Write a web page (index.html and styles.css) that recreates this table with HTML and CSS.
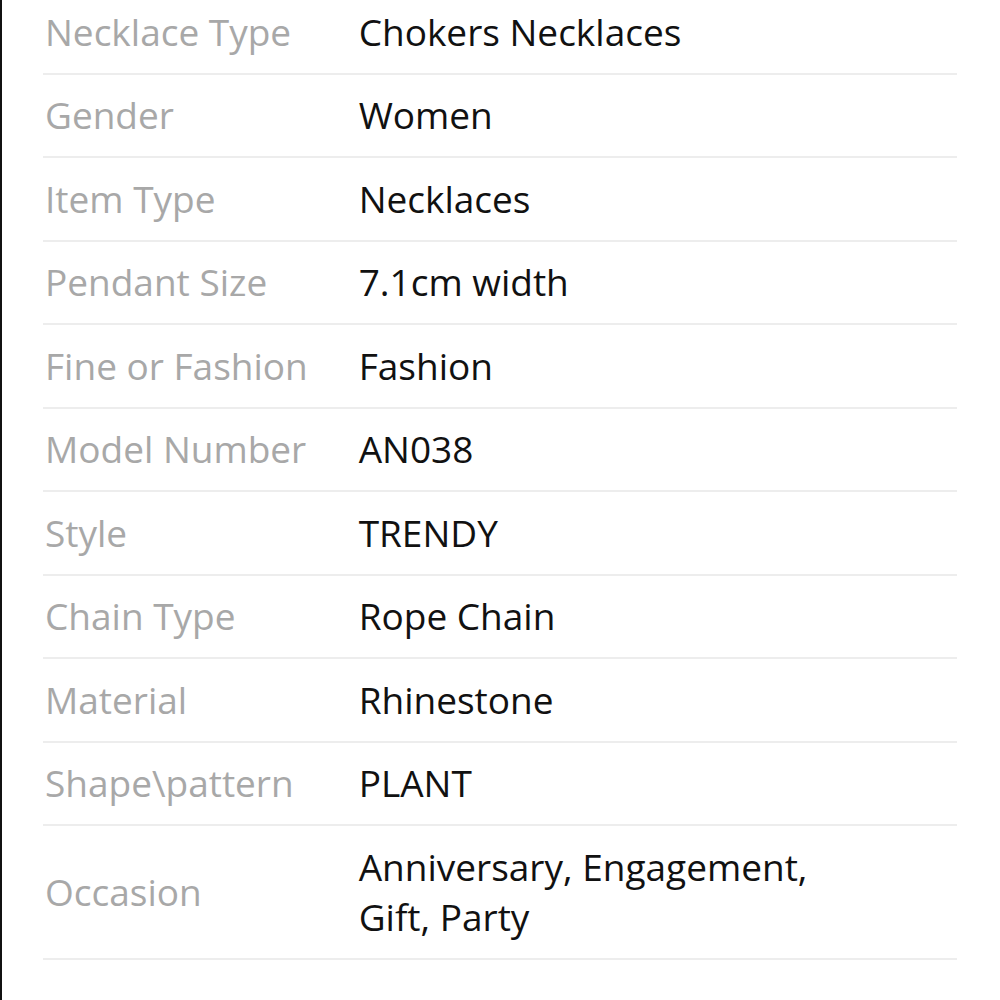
FILE: index.html
```html
<!DOCTYPE html>
<html>
<head>
<meta charset="utf-8">
<title>Item specifics</title>
<link rel="stylesheet" href="styles.css">
</head>
<body>
<div id="wrap">
	<table class="spec">
		<tbody>
			<tr><th>Necklace Type</th><td>Chokers Necklaces</td></tr>
			<tr><th>Gender</th><td>Women</td></tr>
			<tr><th>Item Type</th><td>Necklaces</td></tr>
			<tr><th>Pendant Size</th><td>7.1cm width</td></tr>
			<tr><th>Fine or Fashion</th><td>Fashion</td></tr>
			<tr><th>Model Number</th><td>AN038</td></tr>
			<tr><th>Style</th><td>TRENDY</td></tr>
			<tr><th>Chain Type</th><td>Rope Chain</td></tr>
			<tr><th>Material</th><td>Rhinestone</td></tr>
			<tr><th>Shape\pattern</th><td>PLANT</td></tr>
			<tr><th>Occasion</th><td>Anniversary, Engagement, Gift, Party</td></tr>
		</tbody>
	</table>
</div>
</body>
</html>
```
FILE: styles.css
```css
/** 공통 **/
*{margin:0; padding:0;}
html, body{height:100%; overflow:hidden; background:#fff;}
body{border-left:2px solid #111;}

#wrap{
	padding:0 43px 0 41px;
	margin-top:-9px;
	font-family:"Open Sans", "Liberation Sans", sans-serif;
	font-size:37px;
	line-height:50px;
}

/* 테이블 */
.spec{border-collapse:collapse; width:100%;}
.spec th, .spec td{
	padding:15.75px 0;
	border-bottom:2px solid #ededed;
	vertical-align:middle;
	text-align:left;
}
.spec th{width:314px; padding-left:2px; font-weight:normal; color:#a8a8a8; white-space:nowrap;}
.spec td{width:480px; padding-right:120px; color:#111;}
```
